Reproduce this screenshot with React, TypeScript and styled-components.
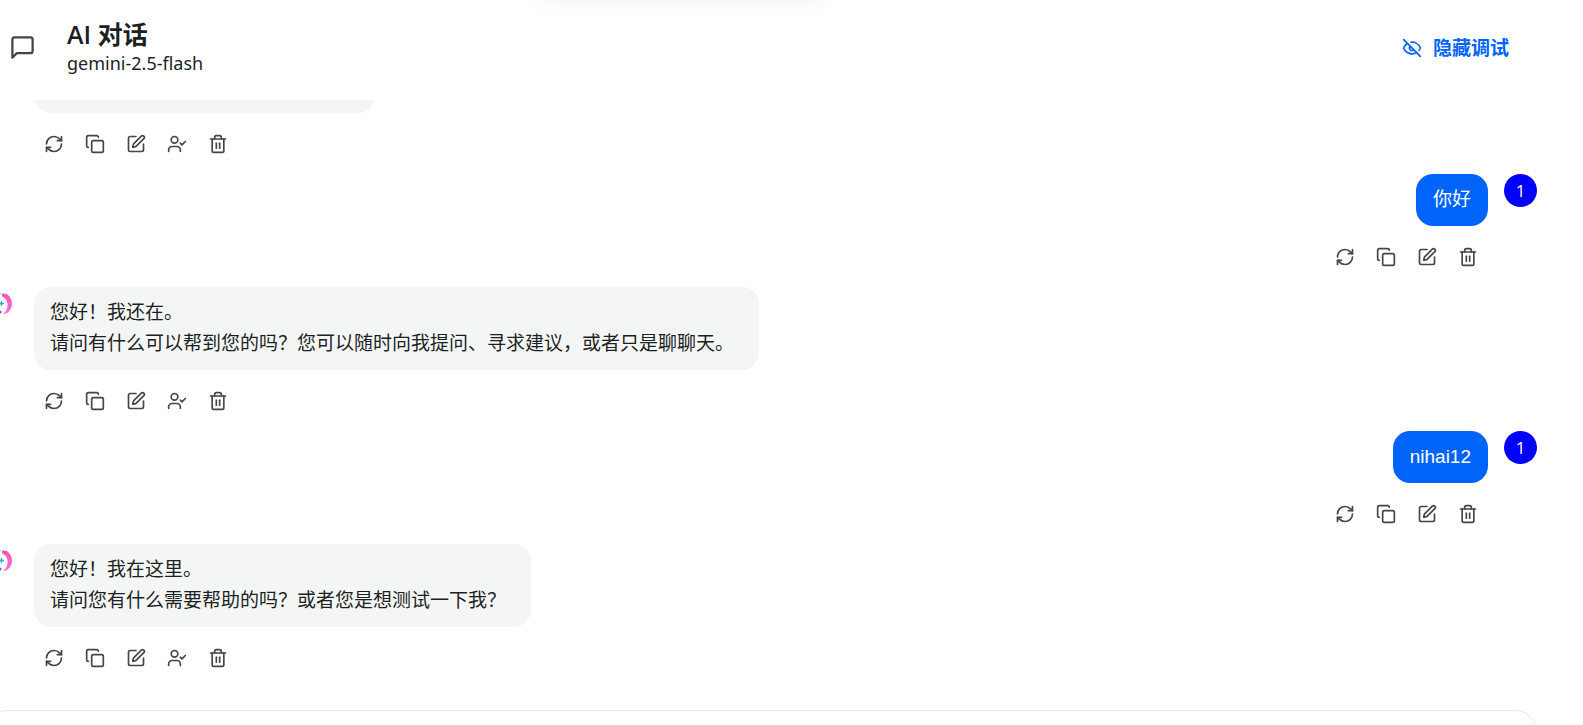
import React from "react";
import styled, { createGlobalStyle } from "styled-components";
import { Copy, EyeOff, RefreshCw, SquarePen, Trash2 } from "lucide-react";

const GlobalStyle = createGlobalStyle`
  *, *::before, *::after { box-sizing: border-box; }
  body {
    margin: 0;
    background: #fff;
    color: #1c1f23;
    font-family: "Open Sans", "Noto Sans CJK SC", sans-serif;
  }
`;

const Page = styled.div`
  position: relative;
  display: flex;
  flex-direction: column;
  height: 100vh;
  overflow: hidden;
`;

const TopShade = styled.div`
  position: absolute;
  bottom: 100%;
  left: 34%;
  width: 288px;
  height: 40px;
  border-radius: 12px;
  box-shadow: 0 0 24px rgba(0, 0, 0, 0.06);
`;

const Header = styled.header`
  display: flex;
  flex: none;
  align-items: center;
  height: 100px;
  padding: 0 74px 5px 9px;
`;

const Heading = styled.div`
  flex: 1;
  margin-left: 31px;
`;

const Title = styled.h1`
  margin: 0;
  font-size: 25px;
  font-weight: 600;
  line-height: 32px;
`;

const Model = styled.p`
  margin: 0;
  font-family: "Noto Sans", sans-serif;
  font-size: 18px;
  line-height: 27px;
`;

const DebugButton = styled.button`
  display: flex;
  align-items: center;
  gap: 11px;
  padding: 0;
  border: 0;
  background: none;
  color: #0064fa;
  font-family: inherit;
  font-size: 19px;
  font-weight: 700;
  line-height: 28px;
  cursor: pointer;
`;

const Messages = styled.main`
  display: flex;
  flex: 1;
  flex-direction: column;
  justify-content: flex-end;
  min-height: 0;
  margin: 0 46px 0 -15px;
  overflow: hidden;
`;

const Message = styled.article<{ $own?: boolean }>`
  display: flex;
  flex: none;
  flex-direction: ${(p) => (p.$own ? "row-reverse" : "row")};
  gap: 16px;
`;

const AvatarSlot = styled.div`
  flex: none;
  width: 33px;
  height: 33px;
`;

const UserAvatar = styled(AvatarSlot)`
  border-radius: 50%;
  background: #0000ff;
  color: #fff;
  font-size: 17px;
  line-height: 34px;
  text-align: center;
`;

const Content = styled.div<{ $own?: boolean }>`
  display: flex;
  flex-direction: column;
  align-items: ${(p) => (p.$own ? "flex-end" : "flex-start")};
`;

const Bubble = styled.div<{ $own?: boolean }>`
  min-width: ${(p) => (p.$own ? "0" : "341px")};
  min-height: ${(p) => (p.$own ? "52px" : "83px")};
  padding: ${(p) => (p.$own ? "10px 17px 11px" : "10px 25px 11px 16px")};
  border-radius: 17px;
  background: ${(p) => (p.$own ? "#0064fa" : "#f4f6f5")};
  color: ${(p) => (p.$own ? "#fff" : "#1c1f23")};
  font-family: "Liberation Sans", "Noto Sans CJK SC", sans-serif;
  font-size: 19px;
  line-height: 31px;
`;

const Line = styled.p`
  margin: 0;
`;

const Actions = styled.div`
  display: flex;
  gap: 8px;
  margin: 14px 4px 14px 3px;
`;

const IconButton = styled.button`
  display: grid;
  place-items: center;
  width: 33px;
  height: 33px;
  padding: 0;
  border: 0;
  border-radius: 50%;
  background: none;
  color: #41464c;
  cursor: pointer;
`;

const Composer = styled.footer`
  flex: none;
  height: 60px;
  margin: 22px 46px -45px -15px;
  border: 1px solid #e8eaea;
  border-radius: 22px;
`;

const ChatIcon = () => (
  <svg width="27" height="27" viewBox="0 0 24 24" fill="none" stroke="#41464c" strokeWidth="2" strokeLinecap="round" strokeLinejoin="round">
    <path d="M21 15a2 2 0 0 1-2 2H7l-4 4V5a2 2 0 0 1 2-2h14a2 2 0 0 1 2 2z" />
  </svg>
);

const UserCheckIcon = () => (
  <svg width="20" height="20" viewBox="0 0 24 24" fill="none" stroke="currentColor" strokeWidth="2" strokeLinecap="round" strokeLinejoin="round">
    <path d="m16 11 2 2 4-4" />
    <path d="M16 21v-2a4 4 0 0 0-4-4H6a4 4 0 0 0-4 4v2" />
    <circle cx="9" cy="7" r="4" />
  </svg>
);

const AssistantAvatar = () => (
  <AvatarSlot>
    <svg width="33" height="33" viewBox="0 0 33 33" fill="none">
      <defs>
        <linearGradient id="crescent" x1="17" y1="6" x2="24" y2="27" gradientUnits="userSpaceOnUse">
          <stop stopColor="#f857a6" />
          <stop offset="1" stopColor="#ff6fe0" />
        </linearGradient>
      </defs>
      <path d="M17 7C19 6 22 6.500 24 9C26 11 27 14 27 17C27 22 23 27 18 27C22 24 23.500 19 22 14.500C21 11 18 10.500 17 9Z" fill="url(#crescent)" />
      <path d="M16.500 14v5M14 16.500h5" stroke="#35a7e8" strokeWidth="1.4" />
      <path d="M13 6.500Q15 5.500 16 7" stroke="#5fd6f5" strokeWidth="1" />
      <circle cx="15" cy="25" r="1.500" fill="#8a3ff0" />
    </svg>
  </AvatarSlot>
);

type MessageData = { own?: boolean; lines: string[] };

const messages: MessageData[] = [
  { lines: [] },
  { own: true, lines: ["你好"] },
  { lines: ["您好！我还在。", "请问有什么可以帮到您的吗？您可以随时向我提问、寻求建议，或者只是聊聊天。"] },
  { own: true, lines: ["nihai12"] },
  { lines: ["您好！我在这里。", "请问您有什么需要帮助的吗？或者您是想测试一下我？"] },
];

const iconProps = { size: 20, strokeWidth: 2 };

export default function App() {
  return (
    <>
      <GlobalStyle />
      <Page>
        <TopShade />
        <Header>
          <ChatIcon />
          <Heading>
            <Title>AI 对话</Title>
            <Model>gemini-2.5-flash</Model>
          </Heading>
          <DebugButton type="button">
            <EyeOff {...iconProps} />
            隐藏调试
          </DebugButton>
        </Header>
        <Messages>
          {messages.map((m, i) => (
            <Message key={i} $own={m.own}>
              {m.own ? <UserAvatar>1</UserAvatar> : <AssistantAvatar />}
              <Content $own={m.own}>
                <Bubble $own={m.own}>
                  {m.lines.map((line) => (
                    <Line key={line}>{line}</Line>
                  ))}
                </Bubble>
                <Actions>
                  <IconButton type="button" aria-label="重试"><RefreshCw {...iconProps} /></IconButton>
                  <IconButton type="button" aria-label="复制"><Copy {...iconProps} /></IconButton>
                  <IconButton type="button" aria-label="编辑"><SquarePen {...iconProps} /></IconButton>
                  {!m.own && (
                    <IconButton type="button" aria-label="切换角色"><UserCheckIcon /></IconButton>
                  )}
                  <IconButton type="button" aria-label="删除"><Trash2 {...iconProps} /></IconButton>
                </Actions>
              </Content>
            </Message>
          ))}
        </Messages>
        <Composer />
      </Page>
    </>
  );
}
